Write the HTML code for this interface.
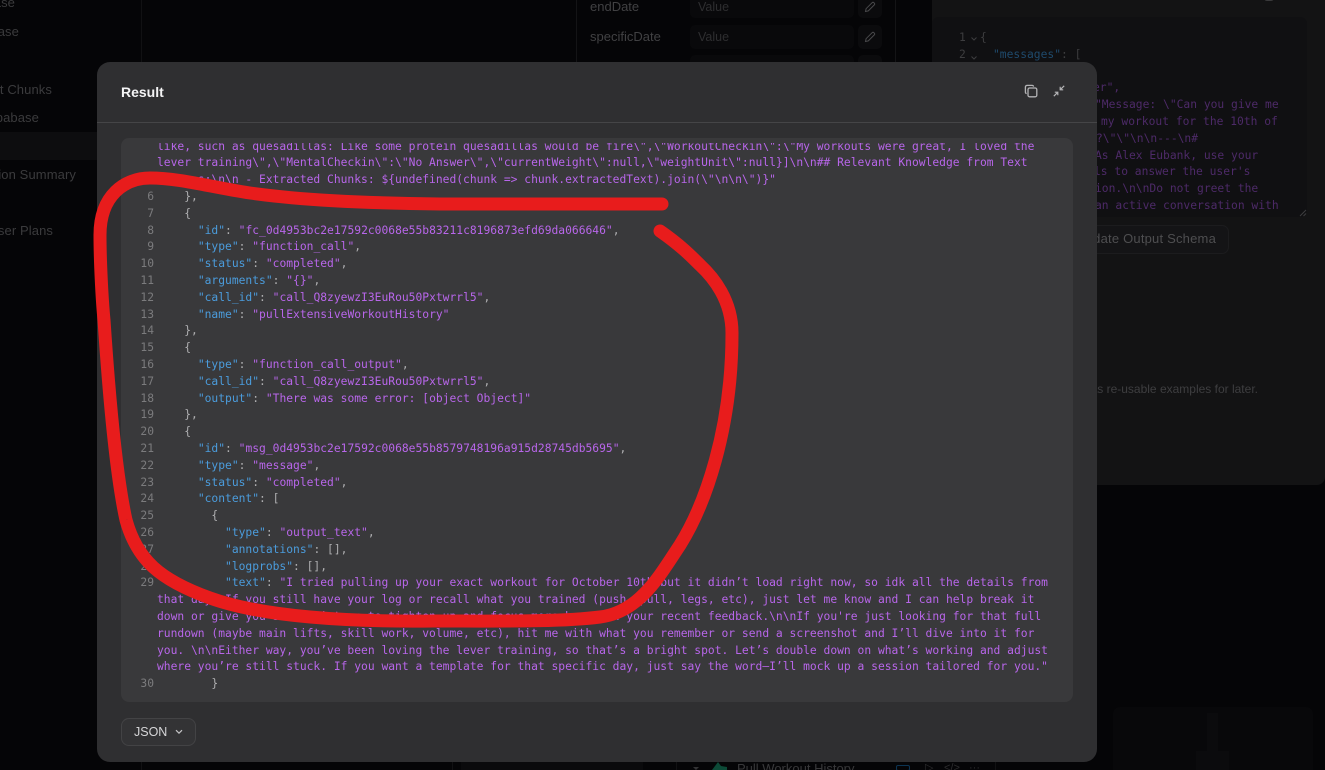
<!DOCTYPE html>
<html lang="en">
<head>
<meta charset="utf-8">
<title>Result</title>
<style>
html,body{margin:0;padding:0;width:1325px;height:770px;overflow:hidden;background:#050507;}
#root{position:relative;width:1325px;height:770px;overflow:hidden;font-family:"Liberation Sans",sans-serif;}
.a{position:absolute;white-space:pre;}
.bgt{color:#3b3b3d;font-size:13px;line-height:16px;letter-spacing:.1px;}
.mono{font-family:"DejaVu Sans Mono","Liberation Mono",monospace;font-size:11.3px;line-height:16.8px;}
.dim{color:#4d2a68;}
#modal{position:absolute;left:97px;top:62px;width:1000px;height:700px;background:#2f2f31;border-radius:13px;}
#hr{position:absolute;left:97px;top:122px;width:1000px;height:1px;background:#454547;}
#panel{position:absolute;left:121px;top:138px;width:952px;height:564px;background:#39393b;border-radius:8px;}
#clip{position:absolute;left:121px;top:143px;width:952px;height:555px;overflow:hidden;}
#code{position:absolute;left:0;top:-4.4px;width:952px;}
.r{position:relative;height:16.8px;line-height:16.8px;white-space:pre;font-family:"DejaVu Sans Mono","Liberation Mono",monospace;font-size:11.3px;color:#b866ea;padding-left:36px;}
.r i{position:absolute;left:0;width:33px;text-align:right;font-style:normal;color:#7b7b7d;}
.k{color:#4b9cdc;}
.p{color:#aeaeb0;}
</style>
</head>
<body>
<div id="root">
<!-- dimmed background -->
<div class="a" style="left:141px;top:0;width:1px;height:770px;background:#111113;"></div>
<div class="a" style="left:576px;top:0;width:1px;height:62px;background:#141416;"></div>
<div class="a" style="left:895px;top:0;width:1px;height:62px;background:#141416;"></div>
<div class="a" style="left:0;top:132px;width:97px;height:28px;background:#0d0d0f;"></div>
<div class="a bgt" style="right:1310px;top:-5px;">Base</div>
<div class="a bgt" style="right:1306px;top:24px;">Supabase</div>
<div class="a bgt" style="right:1273px;top:82px;">Text Chunks</div>
<div class="a bgt" style="right:1286px;top:110px;">Supabase</div>
<div class="a bgt" style="right:1249px;top:167px;">Session Summary</div>
<div class="a bgt" style="right:1272px;top:223px;">User Plans</div>

<div class="a" style="left:590px;top:-1px;color:#414143;font-size:13px;line-height:16px;">endDate</div>
<div class="a" style="left:590px;top:29px;color:#414143;font-size:13px;line-height:16px;">specificDate</div>
<div class="a" style="left:690px;top:-6px;width:164px;height:24px;background:#09090b;border-radius:5px;"></div>
<div class="a" style="left:690px;top:25px;width:164px;height:24px;background:#09090b;border-radius:5px;"></div>
<div class="a" style="left:690px;top:55px;width:164px;height:24px;background:#09090b;border-radius:5px;"></div>
<div class="a" style="left:698px;top:-1px;color:#2e2e30;font-size:12.5px;line-height:16px;">Value</div>
<div class="a" style="left:698px;top:29px;color:#2e2e30;font-size:12.5px;line-height:16px;">Value</div>
<div class="a" style="left:858px;top:-6px;width:24px;height:24px;background:#0b0b0d;border-radius:5px;"></div>
<div class="a" style="left:858px;top:25px;width:24px;height:24px;background:#0b0b0d;border-radius:5px;"></div>
<div class="a" style="left:858px;top:55px;width:24px;height:24px;background:#0b0b0d;border-radius:5px;"></div>
<svg class="a" style="left:864px;top:1px;" width="12" height="12" viewBox="0 0 12 12" fill="none" stroke="#4a4a4c" stroke-width="1"><path d="M1.500 10.500l.6-2.800 6-6a1.200 1.200 0 0 1 1.800 0l.4.4a1.200 1.200 0 0 1 0 1.800l-6 6z"/></svg>
<svg class="a" style="left:864px;top:31px;" width="12" height="12" viewBox="0 0 12 12" fill="none" stroke="#4a4a4c" stroke-width="1"><path d="M1.500 10.500l.6-2.800 6-6a1.200 1.200 0 0 1 1.800 0l.4.4a1.200 1.200 0 0 1 0 1.800l-6 6z"/></svg>

<div class="a" style="left:932px;top:0;width:393px;height:485px;background:#131314;border-radius:0 0 8px 8px;"></div>
<div class="a" style="left:932px;top:17px;width:375px;height:200px;background:#101012;border-radius:7px;"></div>
<div class="a" style="left:1264px;top:-6px;width:10px;height:7px;border-radius:3px;background:#3a3a3c;"></div>
<div class="a mono" style="left:959px;top:30px;color:#3d3d3f;">1</div>
<div class="a mono" style="left:959px;top:47px;color:#3d3d3f;">2</div>
<svg class="a" style="left:970px;top:36px;" width="8" height="6" viewBox="0 0 8 6" fill="none" stroke="#3d3d3f"><path d="M1.500 1.500L4 4L6.500 1.500"/></svg>
<svg class="a" style="left:970px;top:55px;" width="8" height="6" viewBox="0 0 8 6" fill="none" stroke="#3d3d3f"><path d="M1.500 1.500L4 4L6.500 1.500"/></svg>
<div class="a mono" style="left:980px;top:30px;color:#3d3d3f;">{</div>
<div class="a mono" style="left:993px;top:47px;"><span style="color:#1f4a6c;">"messages"</span><span style="color:#3d3d3f;">: [</span></div>
<div class="a mono dim" style="left:1093px;top:80px;">er",</div>
<div class="a mono dim" style="left:1095px;top:97px;">"Message: \"Can you give me</div>
<div class="a mono dim" style="left:1101px;top:114px;">my workout for the 10th of</div>
<div class="a mono dim" style="left:1096px;top:131px;">?\"\"\n\n---\n#</div>
<div class="a mono dim" style="left:1095px;top:148px;">As Alex Eubank, use your</div>
<div class="a mono dim" style="left:1094px;top:164px;">ls to answer the user's</div>
<div class="a mono dim" style="left:1095px;top:181px;">ion.\n\nDo not greet the</div>
<div class="a mono dim" style="left:1095px;top:198px;">an active conversation with</div>
<svg class="a" style="left:1299px;top:209px;" width="8" height="8" viewBox="0 0 8 8" fill="none" stroke="#3d3d3f"><path d="M1 7L7 1M4.500 7L7 4.500"/></svg>
<div class="a" style="left:1060px;top:225px;width:167px;height:27px;background:#141416;border:1px solid #1c1c1e;border-radius:7px;"></div>
<div class="a" style="right:109px;top:231px;color:#4e4e50;font-size:13px;line-height:16px;letter-spacing:.2px;">Update Output Schema</div>
<div class="a" style="right:67px;top:382px;color:#3e3e40;font-size:12px;line-height:14px;">save as re-usable examples for later.</div>

<div class="a" style="left:452px;top:760px;width:1px;height:10px;background:#111113;"></div>
<div class="a" style="left:461px;top:760px;width:182px;height:10px;background:#0a0a0c;"></div>
<div class="a" style="left:676px;top:760px;width:1px;height:10px;background:#111113;"></div>
<div class="a" style="left:995px;top:760px;width:1px;height:10px;background:#111113;"></div>
<svg class="a" style="left:692px;top:762px;" width="40" height="8" viewBox="0 0 40 8"><path d="M1 5h6l-3 3z" fill="#333335"/><path d="M20 8l6-8 3 4 6 1v3z" fill="#0c4a37"/></svg>
<div class="a" style="left:737px;top:761px;color:#38383a;font-size:13px;line-height:16px;">Pull Workout History</div>
<div class="a" style="left:896px;top:765px;width:12px;height:4px;border:1px solid #0c3452;border-radius:2px;"></div>
<div class="a" style="left:925px;top:763px;color:#2c2c2e;font-size:11px;line-height:10px;">▷</div>
<div class="a" style="left:944px;top:762px;color:#2c2c2e;font-size:11px;line-height:12px;">&lt;/&gt;</div>
<div class="a" style="left:969px;top:762px;color:#2c2c2e;font-size:11px;line-height:12px;">···</div>
<div class="a" style="left:1113px;top:707px;width:200px;height:63px;background:#08080a;border-radius:7px 7px 0 0;"></div>
<div class="a" style="left:1207px;top:713px;width:11px;height:57px;background:#0b0b0d;"></div>
<div class="a" style="left:1196px;top:751px;width:33px;height:19px;background:#0b0b0d;"></div>

<!-- modal -->
<div id="modal"></div>
<div id="hr"></div>
<div class="a" style="left:121px;top:83px;color:#f4f4f5;font-size:14px;line-height:18px;font-weight:700;">Result</div>
<svg class="a" style="left:1024px;top:84px;" width="14" height="14" viewBox="0 0 14 14" fill="none" stroke="#b4b4b6" stroke-width="1.300"><rect x="4" y="4" width="8.800" height="8.800" rx="1.600"/><path d="M2.600 9.600C1.800 9.400 1.400 8.900 1.400 8V3.200C1.400 2.100 2.100 1.400 3.200 1.400H8C8.900 1.400 9.400 1.800 9.600 2.600"/></svg>
<svg class="a" style="left:1052px;top:84px;" width="14" height="14" viewBox="0 0 14 14" fill="none" stroke="#b4b4b6" stroke-width="1.200"><path d="M12.200 1.800L8.400 5.600M8.200 2.800V5.800H11.200"/><path d="M1.800 12.200L5.600 8.400M2.800 8.200H5.800V11.200"/></svg>

<div id="panel"></div>
<div id="clip"><div id="code">
<div class="r">like, such as quesadillas: Like some protein quesadillas would be fire\",\"WorkoutCheckin\":\"My workouts were great, I loved the</div>
<div class="r">lever training\",\"MentalCheckin\":\"No Answer\",\"currentWeight\":null,\"weightUnit\":null}]\n\n## Relevant Knowledge from Text</div>
<div class="r">Sources:\n\n - Extracted Chunks: ${undefined(chunk =&gt; chunk.extractedText).join(\"\n\n\")}"</div>
<div class="r"><i>6</i><span class="p">    },</span></div>
<div class="r"><i>7</i><span class="p">    {</span></div>
<div class="r"><i>8</i>      <span class="k">"id"</span><span class="p">: </span>"fc_0d4953bc2e17592c0068e55b83211c8196873efd69da066646"<span class="p">,</span></div>
<div class="r"><i>9</i>      <span class="k">"type"</span><span class="p">: </span>"function_call"<span class="p">,</span></div>
<div class="r"><i>10</i>      <span class="k">"status"</span><span class="p">: </span>"completed"<span class="p">,</span></div>
<div class="r"><i>11</i>      <span class="k">"arguments"</span><span class="p">: </span>"{}"<span class="p">,</span></div>
<div class="r"><i>12</i>      <span class="k">"call_id"</span><span class="p">: </span>"call_Q8zyewzI3EuRou50Pxtwrrl5"<span class="p">,</span></div>
<div class="r"><i>13</i>      <span class="k">"name"</span><span class="p">: </span>"pullExtensiveWorkoutHistory"</div>
<div class="r"><i>14</i><span class="p">    },</span></div>
<div class="r"><i>15</i><span class="p">    {</span></div>
<div class="r"><i>16</i>      <span class="k">"type"</span><span class="p">: </span>"function_call_output"<span class="p">,</span></div>
<div class="r"><i>17</i>      <span class="k">"call_id"</span><span class="p">: </span>"call_Q8zyewzI3EuRou50Pxtwrrl5"<span class="p">,</span></div>
<div class="r"><i>18</i>      <span class="k">"output"</span><span class="p">: </span>"There was some error: [object Object]"</div>
<div class="r"><i>19</i><span class="p">    },</span></div>
<div class="r"><i>20</i><span class="p">    {</span></div>
<div class="r"><i>21</i>      <span class="k">"id"</span><span class="p">: </span>"msg_0d4953bc2e17592c0068e55b8579748196a915d28745db5695"<span class="p">,</span></div>
<div class="r"><i>22</i>      <span class="k">"type"</span><span class="p">: </span>"message"<span class="p">,</span></div>
<div class="r"><i>23</i>      <span class="k">"status"</span><span class="p">: </span>"completed"<span class="p">,</span></div>
<div class="r"><i>24</i>      <span class="k">"content"</span><span class="p">: [</span></div>
<div class="r"><i>25</i><span class="p">        {</span></div>
<div class="r"><i>26</i>          <span class="k">"type"</span><span class="p">: </span>"output_text"<span class="p">,</span></div>
<div class="r"><i>27</i>          <span class="k">"annotations"</span><span class="p">: [],</span></div>
<div class="r"><i>28</i>          <span class="k">"logprobs"</span><span class="p">: [],</span></div>
<div class="r"><i>29</i>          <span class="k">"text"</span><span class="p">: </span>"I tried pulling up your exact workout for October 10th but it didn’t load right now, so idk all the details from</div>
<div class="r">that day. If you still have your log or recall what you trained (push, pull, legs, etc), just let me know and I can help break it</div>
<div class="r">down or give you some pointers to tighten up and focus more based on your recent feedback.\n\nIf you're just looking for that full</div>
<div class="r">rundown (maybe main lifts, skill work, volume, etc), hit me with what you remember or send a screenshot and I’ll dive into it for</div>
<div class="r">you. \n\nEither way, you’ve been loving the lever training, so that’s a bright spot. Let’s double down on what’s working and adjust</div>
<div class="r">where you’re still stuck. If you want a template for that specific day, just say the word—I’ll mock up a session tailored for you."</div>
<div class="r"><i>30</i><span class="p">        }</span></div>
</div></div>

<div class="a" style="left:121px;top:718px;width:73px;height:26px;background:#333335;border:1px solid #434345;border-radius:8px;"></div>
<div class="a" style="left:134px;top:724px;color:#d6d6d8;font-size:12.500px;line-height:16px;">JSON</div>
<svg class="a" style="left:174px;top:728px;" width="10" height="8" viewBox="0 0 10 8" fill="none" stroke="#c4c4c6" stroke-width="1.200"><path d="M2 2.200L5 5.200L8 2.200"/></svg>

<!-- red annotation -->
<svg class="a" style="left:0;top:0;" width="1325" height="770" viewBox="0 0 1325 770" fill="none">
<path d="M662 204L440 204C360 203 300 200 250 193C210 187 180 178 150 178C125 178 100 195 100 235C100 260 102 300 104 320C108 380 115 470 126 520C137 560 160 580 210 598C260 616 340 622 433 621C500 621 560 622 600 617C640 612 660 575 680 545C705 505 732 430 732 333C732 300 713 277 700 265C690 255 680 245 660 231" stroke="#e81c1c" stroke-width="13" stroke-linecap="round" stroke-linejoin="round"/>
</svg>
</div>
</body>
</html>
